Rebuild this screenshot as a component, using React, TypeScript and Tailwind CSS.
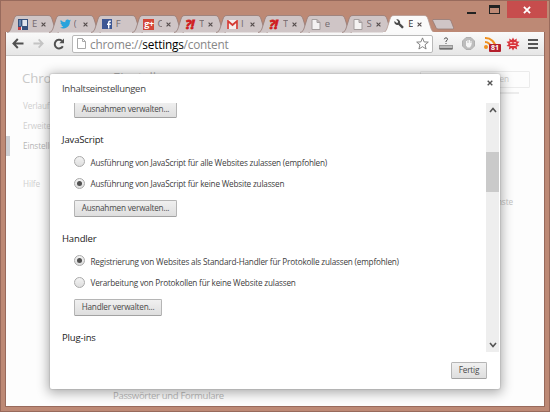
import React from "react";

const TAB_PATH = "M0 17.5 C3 17 3.5 15 4.5 12 L7 4 C8 1.2 9 .5 11 .5 H41 C43 .5 44 1.2 45 4 L47.5 12 C48.5 15 49 17 52 17.5";

function PageIcon() {
  return (
    <svg width="10" height="11" viewBox="0 0 10 11" fill="#f4f2f2" stroke="#a39d9d">
      <path d="M1 .5H6L9 3.5V10.5H1ZM6 .5V3.5H9" />
    </svg>
  );
}

function QuestionBang() {
  return (
    <span className="w-[12px] text-[13px] leading-[12px] font-bold italic tracking-[-0.5px] text-[#d01c20] [-webkit-text-stroke:0.8px_#d01c20]">?!</span>
  );
}

const favicons: Record<string, React.ReactNode> = {
  blocks: (
    <svg width="10" height="11" viewBox="0 0 10 11">
      <rect width="10" height="11" fill="#35507c" />
      <rect x="1" y="1" width="2" height="6" fill="#6484ae" />
      <rect x="4.4" y="1" width="4.6" height="6" fill="#dfe4ec" />
      <rect y="8" width="3" height="3" fill="#c33d41" />
      <rect x="3" y="7.5" width="1" height="3.5" fill="#e5e5ea" />
    </svg>
  ),
  twitter: (
    <svg width="11" height="10" viewBox="0 0 24 20" fill="#29a3dc">
      <path d="M24 2.4a10 10 0 0 1-2.8.8A5 5 0 0 0 23.3.5a10 10 0 0 1-3.1 1.2 4.9 4.9 0 0 0-8.4 4.5A14 14 0 0 1 1.7 1a5 5 0 0 0 1.5 6.6 5 5 0 0 1-2.2-.6 5 5 0 0 0 3.9 4.8 5 5 0 0 1-2.2.1 5 5 0 0 0 4.6 3.4A10 10 0 0 1 0 17.400A14 14 0 0 0 21.500 4.900 10 10 0 0 0 24 2.400Z" />
    </svg>
  ),
  facebook: (
    <svg width="10" height="10" viewBox="0 0 10 10">
      <rect width="10" height="10" fill="#3d5794" />
      <path d="M8.800 2.200H7.800Q6.700 2.200 6.700 3.500V9.500M5 5.200H8.800" stroke="#fff" strokeWidth="1.400" fill="none" />
    </svg>
  ),
  google: (
    <span className="flex h-[11px] w-[11px] items-center justify-center bg-[#d34637] pb-[2px] text-[9px] leading-none font-bold tracking-[-0.5px] text-white">g+</span>
  ),
  bang: <QuestionBang />,
  gmail: (
    <svg width="11" height="9" viewBox="0 0 11 9">
      <rect width="11" height="9" fill="#f5eeee" />
      <path d="M1 9V1L5.500 5L10 1V9" fill="none" stroke="#d43a33" strokeWidth="1.700" />
    </svg>
  ),
  page: <PageIcon />,
  wrench: (
    <svg width="10" height="10" viewBox="0 0 10 10" fill="#4b4b4b">
      <path d="M2.200.6A2.900 2.900 0 0 1 6 4.200L9.500 7.600Q9.800 9.300 8 9.500L4.300 5.800A2.900 2.900 0 0 1 .6 2L2.400 3.800 3.900 3.700 4 2.300Z" />
    </svg>
  ),
};

const tabs = [
  { icon: "blocks", text: "E", close: true },
  { icon: "twitter", text: "(", close: true },
  { icon: "facebook", text: "F", close: false },
  { icon: "google", text: "C", close: true },
  { icon: "bang", text: "T", close: true },
  { icon: "gmail", text: "I", close: true },
  { icon: "bang", text: "T", close: true },
  { icon: "page", text: "e", close: false },
  { icon: "page", text: "S", close: true },
  { icon: "wrench", text: "E", close: true },
];

function Cross({ size, color }: { size: number; color: string }) {
  return (
    <svg width={size} height={size} viewBox="0 0 6 6" stroke={color} strokeWidth="1.4">
      <path d="M.7.7L5.300 5.300M5.300.7L.7 5.300" />
    </svg>
  );
}

function Tab({ icon, text, close, active }: { icon: string; text: string; close: boolean; active: boolean }) {
  return (
    <div className={`relative mr-[-10.2px] h-[18px] w-[52px] shrink-0 ${active ? "z-10" : ""}`}>
      <svg className="absolute inset-0" width="52" height="18" viewBox="0 0 52 18">
        <path d={TAB_PATH} fill={active ? "#fafafa" : "#cfc5c6"} stroke={active ? "#b59a93" : "#967b76"} strokeWidth=".8" />
        {active && <path d="M0 17.500H52" stroke="#fafafa" />}
      </svg>
      <div className="relative flex h-[18px] items-center pl-[11px]">
        <span className="flex w-[12px]">{favicons[icon]}</span>
        <span className={`ml-[2px] w-[5px] overflow-hidden text-[9.5px] leading-[14px] ${active ? "text-[#333]" : "text-[#746a6e]"}`}>{text}</span>
        {close && <span className="ml-[4px]"><Cross size={5} color="#554d4d" /></span>}
      </div>
    </div>
  );
}

function Button({ children, className }: { children: string; className: string }) {
  return (
    <div className={`flex h-[17px] items-center justify-center rounded-[1.5px] border border-[#b5b5b5] border-b-[#a2a2a2] bg-linear-to-b from-[#f0f0f0] to-[#dedede] text-[8.2px] tracking-[-0.2px] whitespace-nowrap text-[#4a4a4a] ${className}`}>
      {children}
    </div>
  );
}

function Radio({ children, on = false }: { children: string; on?: boolean }) {
  return (
    <div className="flex h-[21.500px] items-center">
      <span className="flex h-[11px] w-[11px] shrink-0 items-center justify-center rounded-full border border-[#aaa] bg-linear-to-b from-[#f3f3f3] to-[#dedede]">
        {on && <span className="h-[5px] w-[5px] rounded-full bg-[#505050]" />}
      </span>
      <span className="ml-[5.5px] pt-[2px] text-[8.2px] tracking-[-0.195px] whitespace-nowrap text-[#404040]">{children}</span>
    </div>
  );
}

function Heading({ children, className }: { children: string; className: string }) {
  return <h3 className={`text-[9.500px] leading-[14px] tracking-[-0.15px] text-[#222] ${className}`}>{children}</h3>;
}

function Toolbar() {
  return (
    <div className="flex h-[24px] items-center border-b border-[#c9c9c9] bg-linear-to-b from-[#fafafa] to-[#e6e6e6] pl-[6px]">
      <svg width="12" height="11" viewBox="0 0 12 11" fill="none" stroke="#505050" strokeWidth="2">
        <path d="M11.500 5.500H2M5.800 1L1.500 5.500L5.800 10" />
      </svg>
      <svg className="ml-[9px]" width="11" height="11" viewBox="0 0 12 11" fill="none" stroke="#c4c4c4" strokeWidth="2">
        <path d="M.5 5.500H10M6.200 1L10.500 5.500L6.200 10" />
      </svg>
      <svg className="ml-[9px]" width="12" height="12" viewBox="0 0 12 12" fill="none" stroke="#505050" strokeWidth="2">
        <path d="M9.800 8.300A4.300 4.300 0 1 1 9 3" />
        <path d="M11 .5V5.200H6.300Z" fill="#505050" stroke="none" />
      </svg>
      <div className="ml-[7px] flex h-[18px] w-[361px] items-center rounded-[2px] border border-[#b9b9b9] bg-white pr-[3px] pl-[4px]">
        <svg width="9" height="11" viewBox="0 0 9 11" fill="#fff" stroke="#a9a9a9">
          <path d="M.5.5H5.500L8.500 3.500V10.500H.5ZM5.500.5V3.500H8.500" />
        </svg>
        <span className="ml-[4px] text-[11.8px] leading-[16px] tracking-[-0.2px] text-[#888]">chrome://<span className="text-black">settings</span>/content</span>
        <svg className="ml-auto" width="13" height="13" viewBox="0 0 13 13" fill="#fff" stroke="#777" strokeWidth=".9">
          <path d="M6.500.9L8.100 4.900L12.300 5.100L9 7.800L10.100 12L6.500 9.700L2.900 12L4 7.800L.7 5.100L4.900 4.900Z" />
        </svg>
      </div>
      <svg className="ml-[6px]" width="14" height="13" viewBox="0 0 14 13">
        <path d="M5.300 2.300Q5.500.8 7 .8T8.500 2.300Q8.500 3.300 7 4V5M7 6V7" fill="none" stroke="#555" />
        <rect x=".5" y="8.500" width="13" height="3" fill="#bbb" stroke="#999" />
        <path d="M.5 12H13.500" stroke="#444" />
      </svg>
      <svg className="ml-[9px]" width="13" height="13" viewBox="0 0 13 13">
        <path d="M4 .5H9L12.500 4V9L9 12.500H4L.5 9V4Z" fill="#bdbdbd" stroke="#b0b0b0" />
        <path d="M4.500 7V4M6 6V3M7.500 6V3M9 7V4" stroke="#f5f5f5" />
        <path d="M4 6H9.500V8L8 10.500H5.500L4 8.500Z" fill="#f5f5f5" />
      </svg>
      <div className="relative ml-[9px] h-[16px] w-[17px]">
        <svg width="14" height="14" viewBox="0 0 14 14" fill="none" stroke="#f0901f" strokeWidth="2">
          <path d="M1 2A10 10 0 0 1 11.500 12M1 6A6 6 0 0 1 7 12" />
          <circle cx="2" cy="11" r="1" fill="#f0901f" />
        </svg>
        <span className="absolute right-0 bottom-0 flex h-[8px] w-[12px] items-center justify-center rounded-[1px] bg-[#b41f2c] text-[7px] leading-none font-bold text-white">81</span>
      </div>
      <svg className="ml-[5px]" width="14" height="14" viewBox="0 0 14 14">
        <path d="M7 .5L8.300 3L10.800 1.500L10.500 4.300L13.500 4.700L11.300 7L13.500 9L10.600 9.400L11.200 12.500L8.400 11L7 13.500L5.600 11L2.800 12.500L3.400 9.400L.5 9L2.700 7L.5 4.700L3.500 4.300L3.200 1.500L5.700 3Z" fill="#d8343a" />
        <path d="M4 6.200Q5 4.700 6.200 6.200M7.800 6.200Q9 4.700 10 6.200M4.200 8.500H9.800" fill="none" stroke="#fbdcdc" strokeWidth="1.100" />
      </svg>
      <svg className="ml-[8px]" width="10" height="10" viewBox="0 0 10 10" stroke="#555" strokeWidth="2">
        <path d="M0 1H10M0 5H10M0 9H10" />
      </svg>
    </div>
  );
}

function SettingsPage() {
  return (
    <div className="flex h-[350px] overflow-hidden bg-[#fdfdfd] text-[8.2px] tracking-[-0.1px] text-[#cfcfcf]">
      <div className="flex w-[107px] flex-col pt-[13px]">
        <span className="pl-[16px] text-[13.200px] leading-[18px] text-[#c9c9c9]">Chrome</span>
        <span className="mt-[9px] h-[20px] pl-[17px] leading-[20px]">Verlauf</span>
        <span className="h-[20px] pl-[17px] leading-[20px]">Erweiterungen</span>
        <span className="h-[20px] border-l-4 border-[#cdcfd4] pl-[13px] leading-[20px] text-[#b5b5b5]">Einstellungen</span>
        <span className="mt-[18px] h-[20px] pl-[17px] leading-[20px]">Hilfe</span>
      </div>
      <div className="flex grow flex-col pt-[12px]">
        <div className="flex h-[20px] justify-between pr-[14px]">
          <span className="text-[13.200px] leading-[19px] text-[#bbb]">Einstellungen</span>
          <span className="mt-[3px] flex h-[17px] w-[110px] items-center justify-end rounded-[1px] border border-[#ebebeb] pr-[20px] whitespace-nowrap">In Einstellungen suchen</span>
        </div>
        <div className="mt-[4px] mr-[25px] border-b-2 border-[#ececec]" />
        <span className="mt-[99px] h-[18px] pr-[31px] text-right leading-[18px] text-[#c2c2c2]">Google-Dienste</span>
        <span className="mt-[176px] text-[9.500px] leading-[18px] tracking-[-0.3px] text-[#b9b9b9]">Passwörter und Formulare</span>
      </div>
    </div>
  );
}

function Dialog() {
  return (
    <div className="absolute top-[74px] left-[50px] flex h-[315px] w-[450px] flex-col rounded-[2px] bg-white shadow-[0_2px_12px_2px_rgba(0,0,0,0.32),0_0_1px_1px_rgba(0,0,0,0.08)]">
      <div className="flex h-[29px] shrink-0 items-start justify-between pr-[7px] pl-[12px]">
        <span className="pt-[8px] text-[9.500px] leading-[14px] tracking-[-0.29px] text-[#444]">Inhaltseinstellungen</span>
        <span className="pt-[6px]"><Cross size={6} color="#555" /></span>
      </div>
      <div className="flex h-[249px] overflow-hidden">
        <div className="flex grow flex-col pl-[12px]">
          <Button className="-mt-[2px] ml-[12px] w-[103px] shrink-0">Ausnahmen verwalten...</Button>
          <Heading className="mt-[15px]">JavaScript</Heading>
          <div className="mt-[4px] ml-[12px]">
            <Radio>Ausführung von JavaScript für alle Websites zulassen (empfohlen)</Radio>
            <Radio on>Ausführung von JavaScript für keine Website zulassen</Radio>
            <Button className="mt-[6px] w-[103px]">Ausnahmen verwalten...</Button>
          </div>
          <Heading className="mt-[15px]">Handler</Heading>
          <div className="mt-[4px] ml-[12px]">
            <Radio on>Registrierung von Websites als Standard-Handler für Protokolle zulassen (empfohlen)</Radio>
            <Radio>Verarbeitung von Protokollen für keine Website zulassen</Radio>
            <Button className="mt-[6px] w-[88px]">Handler verwalten...</Button>
          </div>
          <Heading className="mt-[15px]">Plug-ins</Heading>
        </div>
        <div className="mr-px flex w-[13px] flex-col items-center bg-[#eee]">
          <svg className="mt-[4px]" width="8" height="6" viewBox="0 0 8 6" fill="none" stroke="#555" strokeWidth="1.600"><path d="M1 5L4 1.500L7 5" /></svg>
          <div className="mt-[39px] h-[40px] w-[13px] bg-[#cacaca]" />
          <svg className="mt-auto mb-[4px]" width="8" height="6" viewBox="0 0 8 6" fill="none" stroke="#555" strokeWidth="1.600"><path d="M1 1L4 4.500L7 1" /></svg>
        </div>
      </div>
      <div className="flex justify-end pt-[10px] pr-[13px]">
        <Button className="w-[36px]">Fertig</Button>
      </div>
    </div>
  );
}

export default function App() {
  return (
    <div className="relative h-[412px] w-[550px] overflow-hidden border border-[#986a5c] bg-[#bd8975] font-['Open_Sans','Noto_Sans',sans-serif]">
      <div className="flex h-[31px] justify-between pl-[6px]">
        <div className="flex pt-[14px]">
          {tabs.map((t, i) => <Tab key={i} {...t} active={i === 9} />)}
          <svg className="mt-[4px] ml-[7px] shrink-0" width="23" height="11" viewBox="0 0 23 11">
            <path d="M1 .5H17Q18.500.5 19 2L21.500 8.500Q22 10 20.500 10H6Q4.500 10 4 8.500L.7 1.500Z" fill="#cfc5c6" stroke="#967b76" strokeWidth=".8" />
          </svg>
        </div>
        <div className="flex h-[17px] pr-[2px]">
          <span className="mt-[11px] h-[2px] w-[9px] bg-[#222]" />
          <span className="mt-[4px] mr-[7px] ml-[13px] h-[9px] w-[11px] border border-t-[3px] border-[#222]" />
          <span className="flex w-[40px] items-center justify-center bg-[#c74d4d]"><Cross size={8} color="#fff" /></span>
        </div>
      </div>
      <div className="mx-[4px] border border-t-0 border-[#986a5c]">
        <Toolbar />
        <SettingsPage />
      </div>
      <div className="absolute inset-0">
        <div className="relative -top-px -left-px"><Dialog /></div>
      </div>
    </div>
  );
}
